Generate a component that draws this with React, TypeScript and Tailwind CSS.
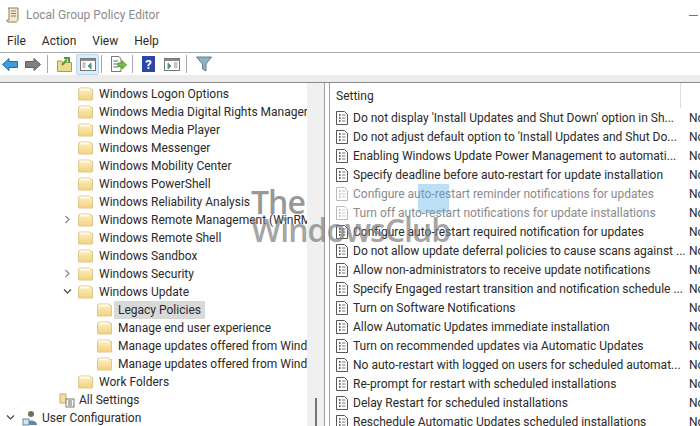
import React from "react";

const Folder = () => (
  <svg width="15" height="14" viewBox="0 0 15 14" className="shrink-0">
    <defs>
      <linearGradient id="fg" x1="0" y1="0" x2="0" y2="1">
        <stop offset="0" stopColor="#fdf0c4" />
        <stop offset="1" stopColor="#f3d27e" />
      </linearGradient>
    </defs>
    <path d="M0.5 3 L1.5 1 H12 L13 2.5 H14.5 V13 H0.5 Z" fill="url(#fg)" stroke="#dcc88e" strokeWidth="1" />
    <path d="M2 1.5 H12 V3.5 H2 Z" fill="#fffbe9" />
  </svg>
);

const Doc = ({ faded }: { faded?: boolean }) => (
  <svg width="12" height="14" viewBox="0 0 12 14" className="shrink-0" opacity={faded ? 0.4 : 1}>
    <path d="M0.5 0.5 H8.5 L11.5 3.5 V13.5 H0.5 Z" fill="#fff" stroke="#555" />
    <path d="M3 4 H4.5 M3 7 H4.5 M3 10 H4.5" stroke="#333" strokeWidth="1.4" />
    <path d="M6 4 H9.5 M6 7 H9.5 M6 10 H9.5" stroke="#777" />
  </svg>
);

const Chevron = ({ open }: { open?: boolean }) => (
  <svg width="9" height="9" viewBox="0 0 9 9" className="shrink-0">
    {open ? (
      <path d="M1 2.5 L4.5 6 L8 2.5" fill="none" stroke="#444" strokeWidth="1.2" />
    ) : (
      <path d="M2.5 1 L6 4.5 L2.5 8" fill="none" stroke="#888" strokeWidth="1.2" />
    )}
  </svg>
);

type Tree = { t: string; depth: number; chev?: "r" | "d"; sel?: boolean; icon?: "folder" | "settings" | "user" };

const tree: Tree[] = [
  { t: "Windows Logon Options", depth: 2 },
  { t: "Windows Media Digital Rights Manager", depth: 2 },
  { t: "Windows Media Player", depth: 2 },
  { t: "Windows Messenger", depth: 2 },
  { t: "Windows Mobility Center", depth: 2 },
  { t: "Windows PowerShell", depth: 2 },
  { t: "Windows Reliability Analysis", depth: 2 },
  { t: "Windows Remote Management (WinRM)", depth: 2, chev: "r" },
  { t: "Windows Remote Shell", depth: 2 },
  { t: "Windows Sandbox", depth: 2 },
  { t: "Windows Security", depth: 2, chev: "r" },
  { t: "Windows Update", depth: 2, chev: "d" },
  { t: "Legacy Policies", depth: 3, sel: true },
  { t: "Manage end user experience", depth: 3 },
  { t: "Manage updates offered from Windows Update", depth: 3 },
  { t: "Manage updates offered from Windows Server", depth: 3 },
  { t: "Work Folders", depth: 2 },
  { t: "All Settings", depth: 1, icon: "settings" },
  { t: "User Configuration", depth: 0, chev: "d", icon: "user" },
];

const settings: { t: string; faded?: boolean }[] = [
  { t: "Do not display 'Install Updates and Shut Down' option in Sh..." },
  { t: "Do not adjust default option to 'Install Updates and Shut Do..." },
  { t: "Enabling Windows Update Power Management to automati..." },
  { t: "Specify deadline before auto-restart for update installation" },
  { t: "Configure auto-restart reminder notifications for updates", faded: true },
  { t: "Turn off auto-restart notifications for update installations", faded: true },
  { t: "Configure auto-restart required notification for updates" },
  { t: "Do not allow update deferral policies to cause scans against ..." },
  { t: "Allow non-administrators to receive update notifications" },
  { t: "Specify Engaged restart transition and notification schedule ..." },
  { t: "Turn on Software Notifications" },
  { t: "Allow Automatic Updates immediate installation" },
  { t: "Turn on recommended updates via Automatic Updates" },
  { t: "No auto-restart with logged on users for scheduled automat..." },
  { t: "Re-prompt for restart with scheduled installations" },
  { t: "Delay Restart for scheduled installations" },
  { t: "Reschedule Automatic Updates scheduled installations" },
];

const Sep = () => <div className="w-px h-[18px] bg-[#a8a8a8]" />;

export default function App() {
  return (
    <div className="relative w-[700px] h-[426px] overflow-hidden bg-white text-[12px] text-[#2a2a2a] font-['Roboto','Noto_Sans',sans-serif]">
      {/* title bar */}
      <div className="h-[30px] flex items-center pl-[6px] gap-[6px]">
        <svg width="14" height="16" viewBox="0 0 14 16">
          <path d="M2 1 H12 V12 C12 14 11 15 9 15 H2 C1 15 0.5 14 1 13 H3 V3 C3 2 3 1 2 1 Z" fill="#f3ead0" stroke="#8a7f63" />
          <path d="M5 4 H10 M5 6.5 H10 M5 9 H10" stroke="#8a7f63" />
        </svg>
        <span className="text-[12px] text-[#8c8c8c]">Local Group Policy Editor</span>
        <div className="ml-auto mr-[2px] w-[9px] h-px bg-[#777]" />
      </div>
      {/* menu */}
      <div className="h-[22px] flex items-center pl-[7px] gap-[16px] border-b border-[#a9a9a9] box-content text-[12px]">
        <span>File</span>
        <span>Action</span>
        <span>View</span>
        <span>Help</span>
      </div>
      {/* toolbar */}
      <div className="h-[22px] flex items-center pl-[2px] bg-white">
        <svg width="16" height="13" viewBox="0 0 16 13">
          <path d="M0.5 6.5 L7 0.5 V3.5 H15.5 V9.5 H7 V12.5 Z" fill="#3f9bdc" stroke="#1f6ea8" />
        </svg>
        <svg width="16" height="13" viewBox="0 0 16 13" className="ml-[7px]">
          <path d="M15.5 6.5 L9 0.5 V3.5 H0.5 V9.5 H9 V12.5 Z" fill="#808080" stroke="#5d5d5d" />
        </svg>
        <div className="ml-[6px]"><Sep /></div>
        <svg width="15" height="16" viewBox="0 0 15 16" className="ml-[9px]">
          <path d="M0.5 5 H5 L6 6.5 H14.5 V15.5 H0.5 Z" fill="#ecdc8e" stroke="#b59b45" />
          <path d="M5 9 L10 3.5 M7 2 H12 V7" fill="none" stroke="#4a9a3a" strokeWidth="2" />
        </svg>
        <div className="ml-[4px] w-[23px] h-[21px] flex items-center justify-center bg-[#dcecf8] border border-[#b8d6ec] rounded-[2px] shrink-0">
          <svg width="16" height="13" viewBox="0 0 16 13">
            <rect x="0.5" y="0.5" width="15" height="12" fill="#fff" stroke="#777" />
            <rect x="1" y="1" width="14" height="2" fill="#8a8a8a" />
            <path d="M2.5 5 H5.5 M2.5 7 H5.5 M2.5 9 H5.5" stroke="#888" />
            <path d="M11 5 L8 8 L11 11 Z" stroke="#4d9a7c" fill="#4d9a7c" />
          </svg>
        </div>
        <div className="ml-[2px]"><Sep /></div>
        <svg width="17" height="16" viewBox="0 0 17 16" className="ml-[8px]">
          <path d="M1.5 0.5 H9 L11 3 V15.5 H1.5 Z" fill="#fff" stroke="#777" />
          <path d="M3.5 5 H8 M3.5 8 H8 M3.5 11 H8" stroke="#666" />
          <path d="M8 7 H12 V4.5 L16.5 9 L12 13 V10.5 H8 Z" fill="#7cc24a" stroke="#4f9a2c" />
        </svg>
        <div className="ml-[5px]"><Sep /></div>
        <div className="ml-[9px] w-[13px] h-[16px] bg-[#2b48a8] flex items-center justify-center text-white font-bold text-[13px] leading-none">?</div>
        <svg width="16" height="13" viewBox="0 0 16 13" className="ml-[9px]">
          <rect x="0.5" y="0.5" width="15" height="12" fill="#fff" stroke="#777" />
          <rect x="1" y="1" width="14" height="2" fill="#8a8a8a" />
          <path d="M4 5 L7 8 L4 11 Z" stroke="#4d9a7c" fill="#4d9a7c" />
          <path d="M10 5 H13.5 M10 7 H13.5 M10 9 H13.5" stroke="#888" />
        </svg>
        <div className="ml-[6px]"><Sep /></div>
        <svg width="16" height="16" viewBox="0 0 16 16" className="ml-[9px]">
          <path d="M0.5 1 H15.5 L10 8 V15 L6.5 13 V8 Z" fill="#8fb3c4" stroke="#5d7f90" />
        </svg>
      </div>
      {/* strip */}
      <div className="h-[8px] bg-[#ececec] border-b border-[#8a8a8a]" />
      {/* panes */}
      <div className="flex h-[343px]">
        <div className="relative w-[307px] shrink-0 overflow-hidden pt-[2px]">
          {tree.map((r) => {
            const left = r.depth === 0 ? 6 : r.depth === 1 ? 40 : r.depth === 2 ? 78 : 97;
            return (
              <div key={r.t} className="h-[18px] flex items-center whitespace-nowrap" style={{ paddingLeft: left }}>
                <div className="relative flex items-center">
                  {r.chev && (
                    <span className="absolute" style={{ left: r.depth === 0 ? 0 : -15, top: 4 }}>
                      <Chevron open={r.chev === "d"} />
                    </span>
                  )}
                  {r.icon === "settings" ? (
                    <svg width="16" height="16" viewBox="0 0 16 16" className="shrink-0 ml-[19px]">
                      <path d="M1 2 H7 V11 H1 Z" fill="#f3dea0" stroke="#c9ab62" />
                      <rect x="7" y="7" width="8" height="8" fill="#fff" stroke="#777" />
                      <path d="M9 9 H13 M9 11 H13 M9 13 H13" stroke="#666" />
                    </svg>
                  ) : r.icon === "user" ? (
                    <svg width="16" height="16" viewBox="0 0 16 16" className="shrink-0 ml-[16px]">
                      <circle cx="9" cy="4" r="3" fill="#7d6a55" />
                      <path d="M3 15 C3 9 15 9 15 15 Z" fill="#5f88a8" />
                      <rect x="1" y="9" width="6" height="6" fill="#d7e3ea" stroke="#6a8aa0" />
                    </svg>
                  ) : (
                    <Folder />
                  )}
                  <span className={r.sel ? "ml-[2px] bg-[#d9d9d9] pl-[4px] pr-[4px] leading-[18px]" : r.icon ? "ml-[4px]" : "ml-[6px]"}>{r.t}</span>
                </div>
              </div>
            );
          })}
        </div>
        {/* scrollbar gutter */}
        <div className="relative w-[17px] bg-[#f0f0f0] border-r border-[#a0a0a0] box-content">
          <div className="absolute right-[7px] bottom-0 h-[28px] w-[2px] bg-[#777]" />
        </div>
        <div className="w-[4px]" />
        <div className="flex-1 border-l border-[#a0a0a0] relative overflow-hidden">
          <div className="h-[25px] flex items-center pl-[6px] relative">
            <span>Setting</span>
            <div className="absolute left-[350px] top-0 h-[25px] w-px bg-[#dddddd]" />
          </div>
          <div>
            {settings.map((s) => (
              <div key={s.t} className="h-[19px] flex items-center whitespace-nowrap pl-[6px] relative">
                <Doc faded={s.faded} />
                <span className={`ml-[5px] ${s.faded ? "text-[#8a8a8a]" : ""}`}>{s.t}</span>
                <span className="absolute left-[359px]">Not configured</span>
              </div>
            ))}
          </div>
        </div>
      </div>
      {/* watermark */}
      <div className="absolute left-[418px] top-[184px] w-[31px] h-[29px] bg-[#5aaee6] opacity-40" />
      <div className="absolute left-[251px] top-[180px] text-[32px] font-semibold tracking-[-1px] leading-[44px] text-[#7f7f7f] opacity-80 font-['Open_Sans',sans-serif]">The</div>
      <div className="absolute left-[251px] top-[208px] text-[32px] font-semibold tracking-[-1px] leading-[44px] text-[#7f7f7f] opacity-70 font-['Open_Sans',sans-serif]">WindowsClub</div>
    </div>
  );
}
